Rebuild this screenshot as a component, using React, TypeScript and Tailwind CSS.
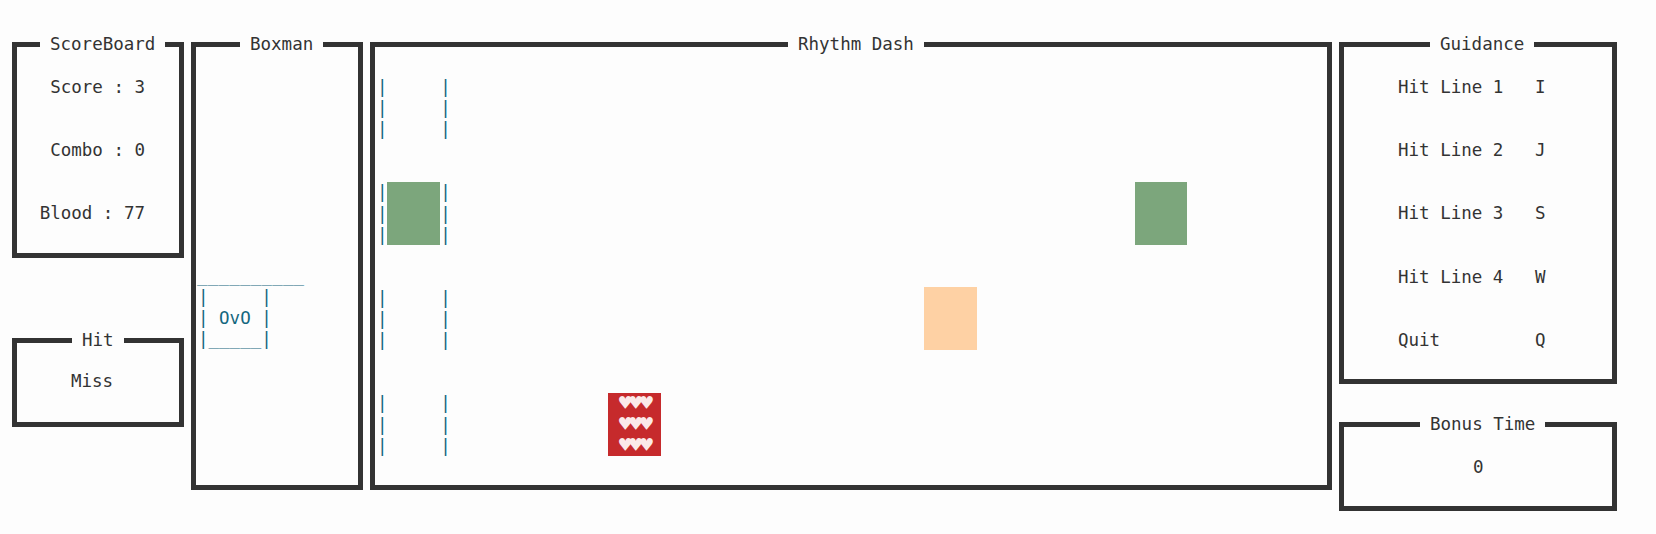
import React from "react";

const mono = "font-['DejaVu_Sans_Mono',monospace] text-[17.5px] leading-[21px] whitespace-pre";

function Box({ title, titleLeft, className, children }: { title: string; titleLeft: number; className: string; children?: React.ReactNode }) {
  return (
    <div className={`relative border-[5px] border-[#333333] ${className}`}>
      <span
        className="absolute top-[-13px] bg-[#fdfdfd] px-[10px] text-[#333333]"
        style={{ left: titleLeft - 15 }}
      >
        {title}
      </span>
      {children}
    </div>
  );
}

function Lines({ items, className }: { items: string[]; className: string }) {
  return (
    <div className={`flex flex-col gap-[42.2px] ${className}`}>
      {items.map((t) => (
        <div key={t}>{t}</div>
      ))}
    </div>
  );
}

function Lane({ tiles }: { tiles: { left: number; bg: string; hearts?: boolean }[] }) {
  return (
    <div className="relative h-[63.3px] leading-[21.1px] text-[#14677f]">
      <div>{"|     |"}</div>
      <div>{"|     |"}</div>
      <div>{"|     |"}</div>
      {tiles.map((t) => (
        <div
          key={t.left}
          className="absolute top-[-0.6px] h-[63px] w-[52.7px] text-center text-[#fbe9e9]"
          style={{ left: t.left, backgroundColor: t.bg }}
        >
          {t.hearts ? (
            <>
              <div className="pl-[1px] text-[21px] leading-[21.1px] tracking-[-2px]">♥♥♥</div>
              <div className="pl-[1px] text-[21px] leading-[21.1px] tracking-[-2px]">♥♥♥</div>
              <div className="pl-[1px] text-[21px] leading-[21.1px] tracking-[-2px]">♥♥♥</div>
            </>
          ) : null}
        </div>
      ))}
    </div>
  );
}

export default function App() {
  return (
    <div className={`flex h-[534px] w-[1656px] gap-[7px] bg-[#fdfdfd] pl-[12px] pt-[42px] text-[#333333] ${mono}`}>
      <div className="flex w-[172px] flex-col gap-[80px]">
        <Box title="ScoreBoard" titleLeft={38} className="h-[216px]">
          <Lines items={["Score : 3", "Combo : 0", "Blood : 77"]} className="items-end pr-[34px] pt-[30px]" />
        </Box>
        <Box title="Hit" titleLeft={70} className="h-[89px]">
          <Lines items={["Miss"]} className="pl-[54px] pt-[28px]" />
        </Box>
      </div>

      <Box title="Boxman" titleLeft={59} className="h-[448px] w-[172px]">
        <div className="pl-[1px] pt-[219px] text-[#14677f]">
          <div className="tracking-[0.2px]">{"__________"}</div>
          <div className="pl-[1px]">{"|     |"}</div>
          <div className="pl-[1px]">{"| OvO |"}</div>
          <div className="pl-[1px]">{"|_____|"}</div>
        </div>
      </Box>

      <Box title="Rhythm Dash" titleLeft={428} className="h-[448px] w-[962px]">
        <div className="flex flex-col gap-[42.2px] pl-[2px] pt-[30px]">
          <Lane tiles={[]} />
          <Lane tiles={[{ left: 10, bg: "#7ca67c" }, { left: 757.5, bg: "#7ca67c" }]} />
          <Lane tiles={[{ left: 547, bg: "#fed1a4" }]} />
          <Lane tiles={[{ left: 231, bg: "#c62a2c", hearts: true }]} />
        </div>
      </Box>

      <div className="flex w-[278px] flex-col gap-[38px]">
        <Box title="Guidance" titleLeft={101} className="h-[342px]">
          <Lines
            items={["Hit Line 1   I", "Hit Line 2   J", "Hit Line 3   S", "Hit Line 4   W", "Quit         Q"]}
            className="pl-[54px] pt-[30px]"
          />
        </Box>
        <Box title="Bonus Time" titleLeft={91} className="h-[89px]">
          <Lines items={["0"]} className="pl-[129px] pt-[30px]" />
        </Box>
      </div>
    </div>
  );
}
